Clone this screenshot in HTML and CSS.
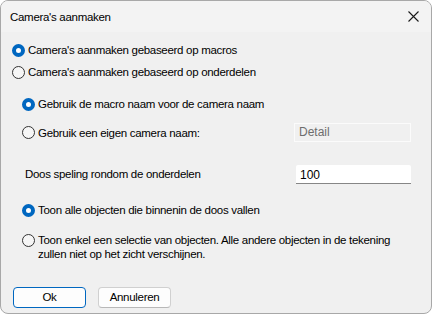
FILE: index.html
```html
<!doctype html>
<html>
  <head>
    <meta charset="utf-8">
    <title>Camera's aanmaken</title>
    <link rel="stylesheet" href="styles.css">
  </head>
  <body>
    <div class="window">
      <header class="titlebar">
        <span class="title">Camera's aanmaken</span>
        <span class="close">
          <svg width="11" height="11" viewBox="0 0 11 11"><path d="M0.5 0.5 L10.5 10.5 M10.5 0.5 L0.5 10.5" stroke="#1a1a1a" stroke-width="1.1" fill="none"/></svg>
        </span>
      </header>

      <section class="content">
        <div class="row r1"><span class="radio checked"></span><span>Camera's aanmaken gebaseerd op macros</span></div>
        <div class="row r2"><span class="radio"></span><span>Camera's aanmaken gebaseerd op onderdelen</span></div>

        <div class="row r3 indent"><span class="radio checked"></span><span>Gebruik de macro naam voor de camera naam</span></div>
        <div class="row r4 indent">
          <span class="radio"></span><span class="grow">Gebruik een eigen camera naam:</span>
          <span class="field disabled">Detail</span>
        </div>

        <div class="row r5 label-row">
          <span class="grow">Doos speling rondom de onderdelen</span>
          <span class="field">100</span>
        </div>

        <div class="row r6 indent"><span class="radio checked"></span><span>Toon alle objecten die binnenin de doos vallen</span></div>
        <div class="row r7 indent multi">
          <span class="radio"></span>
          <span class="text">Toon enkel een selectie van objecten. Alle andere objecten in de tekening<br>zullen niet op het zicht verschijnen.</span>
        </div>

        <div class="buttons">
          <span class="button default">Ok</span>
          <span class="button">Annuleren</span>
        </div>
      </section>
    </div>
  </body>
</html>
```

FILE: styles.css
```css
html, body {
  margin: 0;
  padding: 0;
}

body {
  background: #ffffff;
  font-family: "Liberation Sans", Arial, sans-serif;
  font-size: 11.5px;
  letter-spacing: -0.3px;
  color: #000;
}

.window {
  width: 430px;
  height: 312px;
  border: 1px solid #a8a8a8;
  border-radius: 8px;
  overflow: hidden;
  background: #f0f0f0;
  display: flex;
  flex-direction: column;
}

.titlebar {
  height: 31px;
  background: #f3f3f3;
  display: flex;
  align-items: center;
  justify-content: space-between;
  padding: 0 12px 0 9px;
  flex-shrink: 0;
}

.close {
  display: flex;
}

.content {
  padding: 10px 0 0 11px;
  flex: 1;
}

.row {
  display: flex;
  align-items: center;
  height: 16px;
  line-height: 16px;
}

.radio {
  width: 11px;
  height: 11px;
  border: 1px solid #333;
  border-radius: 50%;
  background: #f6f6f6;
  margin-right: 3px;
  flex-shrink: 0;
  box-sizing: content-box;
}

.radio.checked {
  width: 5px;
  height: 5px;
  border: 4px solid #0067c0;
  background: #ffffff;
}

.r2 { margin-top: 6px; }
.r3 { margin-top: 16px; }
.r4 { margin-top: 11px; height: 19px; }
.r5 { margin-top: 22px; height: 20px; }
.r6 { margin-top: 18px; }
.r7 { margin-top: 15px; }

.indent {
  padding-left: 10px;
}

.label-row {
  padding-left: 13px;
}

.grow {
  flex: 1;
}

.field {
  width: 111px;
  margin-right: 20px;
  padding-left: 4px;
  box-sizing: content-box;
  font-size: 12px;
  letter-spacing: 0;
}

.r4 .field {
  height: 17px;
  line-height: 17px;
  border: 1px solid #fbfbfb;
  background: #f0f0f0;
  color: #6d6d6d;
}

.r5 .field {
  height: 18px;
  line-height: 20px;
  background: #ffffff;
  border-bottom: 1px solid #868686;
  border-radius: 2px 2px 0 0;
}

.multi {
  align-items: flex-start;
  height: auto;
  line-height: 14px;
}

.multi .radio {
  margin-top: 1px;
}

.buttons {
  display: flex;
  gap: 12px;
  margin-top: 26px;
  padding-left: 1px;
}

.button {
  width: 71px;
  height: 19px;
  line-height: 19px;
  text-align: center;
  background: #fdfdfd;
  border: 1px solid #d0d0d0;
  border-bottom-color: #b8b8b8;
  border-radius: 4px;
}

.button.default {
  border: 1px solid #0067c0;
}
```
